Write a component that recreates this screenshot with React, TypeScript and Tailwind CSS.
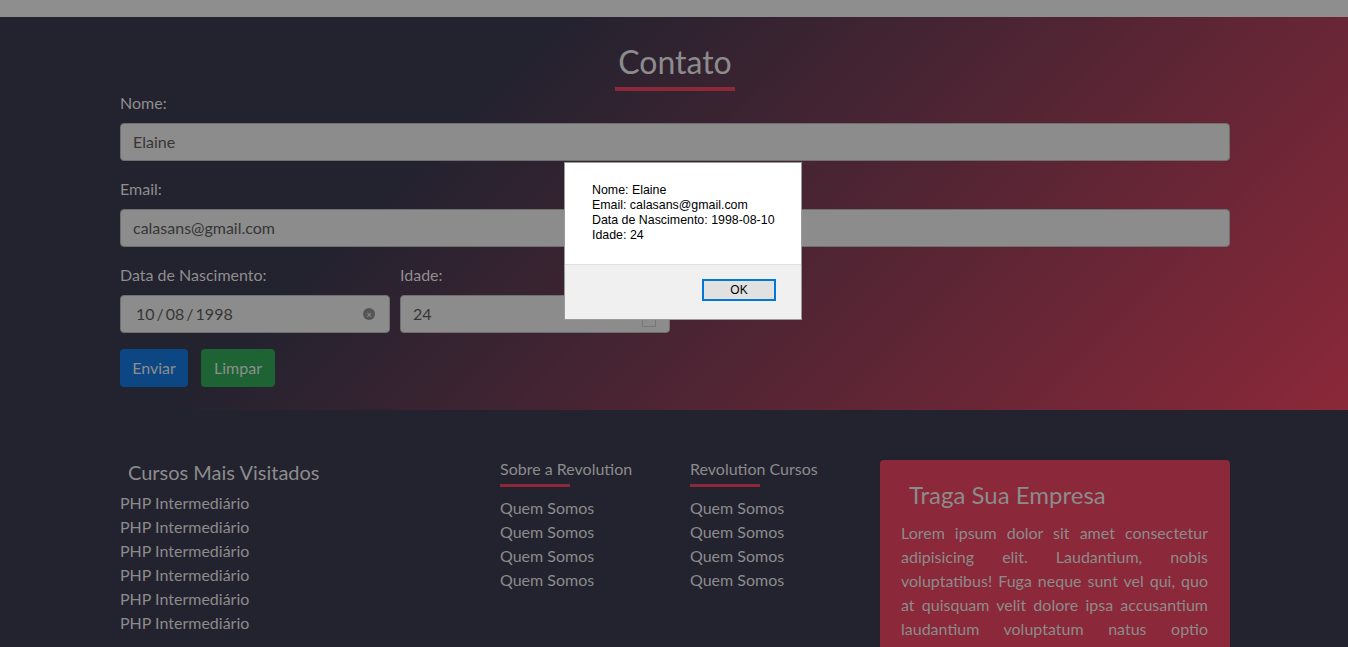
import React from 'react'

const cursos = Array.from({ length: 6 }, () => 'PHP Intermediário')
const links = Array.from({ length: 4 }, () => 'Quem Somos')

function Field({ label, value }: { label: string; value: string }) {
  return (
    <div className="mb-4">
      <label className="mb-2 block h-6 leading-6 text-[#8e8e8e]">{label}</label>
      <div className="flex h-[38px] items-center rounded border border-[#6f6f6f] bg-[#8c8c8c] px-3 text-[#363636]">
        {value}
      </div>
    </div>
  )
}

function FooterCol({ title, items }: { title: string; items: string[] }) {
  return (
    <div className="w-[190px]">
      <h4 className="h-6 leading-6 text-[#8c8c8c]">{title}</h4>
      <div className="mb-[9px] mt-[3px] h-[3px] w-[70px] bg-[#8b2839]" />
      {items.map((t, i) => (
        <p key={i} className="leading-6 text-[#8c8c8c]">{t}</p>
      ))}
    </div>
  )
}

export default function App() {
  return (
    <div className="relative h-[647px] overflow-hidden bg-[#23222f] text-base font-['Lato',sans-serif]">
      <div className="h-[17px] bg-[#8e8e8e]" />

      <section className="h-[393px] bg-[linear-gradient(135deg,#23222f_32%,#8b2839_100%)] pt-[26px]">
        <div className="ml-[120px] w-[1110px]">
          <h2 className="text-center text-[32px] leading-[38px] text-[#8c8c8c]">Contato</h2>
          <div className="mx-auto mt-[6px] h-1 w-[120px] bg-[#8b2839]" />

          <Field label="Nome:" value="Elaine" />
          <Field label="Email:" value="calasans@gmail.com" />

          <div className="mb-4 flex gap-[10px]">
            <div className="w-[270px]">
              <label className="mb-2 block h-6 leading-6 text-[#8e8e8e]">Data de Nascimento:</label>
              <div className="flex h-[38px] items-center justify-between rounded border border-[#6f6f6f] bg-[#8c8c8c] pl-[15px] pr-[14px] text-[#363636]">
                <span className="flex gap-[2px]">
                  <span>10</span><span>/</span><span>08</span><span>/</span><span>1998</span>
                </span>
                <span className="flex h-3 w-3 items-center justify-center rounded-full bg-[#555] text-[9px] font-bold leading-none text-[#8c8c8c]">×</span>
              </div>
            </div>
            <div className="w-[270px]">
              <label className="mb-2 block h-6 leading-6 text-[#8e8e8e]">Idade:</label>
              <div className="flex h-[38px] items-center justify-between rounded border border-[#6f6f6f] bg-[#8c8c8c] pl-3 pr-[13px] text-[#363636]">
                <span>24</span>
                <span className="mt-[6px] h-[20px] w-[14px] border border-[#777]" />
              </div>
            </div>
          </div>

          <div className="flex gap-[13px]">
            <button type="button" className="h-[38px] w-[68px] rounded bg-[#0c4783] text-[#8e8e8e]">Enviar</button>
            <button type="button" className="h-[38px] w-[74px] rounded bg-[#1d6334] text-[#8e8e8e]">Limpar</button>
          </div>
        </div>
      </section>

      <footer className="ml-[120px] flex w-[1110px] pb-6">
        <div className="w-[380px] pt-[48px]">
          <h3 className="mb-[5px] pl-2 text-xl leading-7 text-[#8c8c8c]">Cursos Mais Visitados</h3>
          {cursos.map((t, i) => (
            <p key={i} className="leading-6 text-[#8c8c8c]">{t}</p>
          ))}
        </div>
        <div className="flex pt-[47px]">
          <FooterCol title="Sobre a Revolution" items={links} />
          <FooterCol title="Revolution Cursos" items={links} />
        </div>
        <div className="mt-[50px] w-[350px] rounded bg-[#8b2839] pb-5 pl-[21px] pr-[22px] pt-5">
          <h3 className="pl-2 text-2xl leading-[29px] text-[#8c8c8c]">Traga Sua Empresa</h3>
          <p className="mt-[12px] text-justify leading-6 text-[#8c8c8c]">
            Lorem ipsum dolor sit amet consectetur adipisicing elit. Laudantium, nobis voluptatibus! Fuga neque sunt vel qui, quo at quisquam velit dolore ipsa accusantium laudantium voluptatum natus optio tempore, nemo deleniti.
          </p>
        </div>
      </footer>

      <div className="absolute left-[564px] top-[162px] w-[238px] border border-[#9a9a9a] bg-white font-['Liberation_Sans',Arial,sans-serif] text-[12.4px] text-black">
        <div className="h-[101px] pl-[27px] pt-5 leading-[15px]">
          <p>Nome: Elaine</p>
          <p>Email: calasans@gmail.com</p>
          <p>Data de Nascimento: 1998-08-10</p>
          <p>Idade: 24</p>
        </div>
        <div className="flex h-[55px] justify-end border-t border-[#dfdfdf] bg-[#f0f0f0] pr-[25px] pt-[14px]">
          <button type="button" className="h-[22px] w-[74px] border-2 border-[#0078d7] bg-[#e1e1e1] text-xs leading-none text-black">OK</button>
        </div>
      </div>
    </div>
  )
}
